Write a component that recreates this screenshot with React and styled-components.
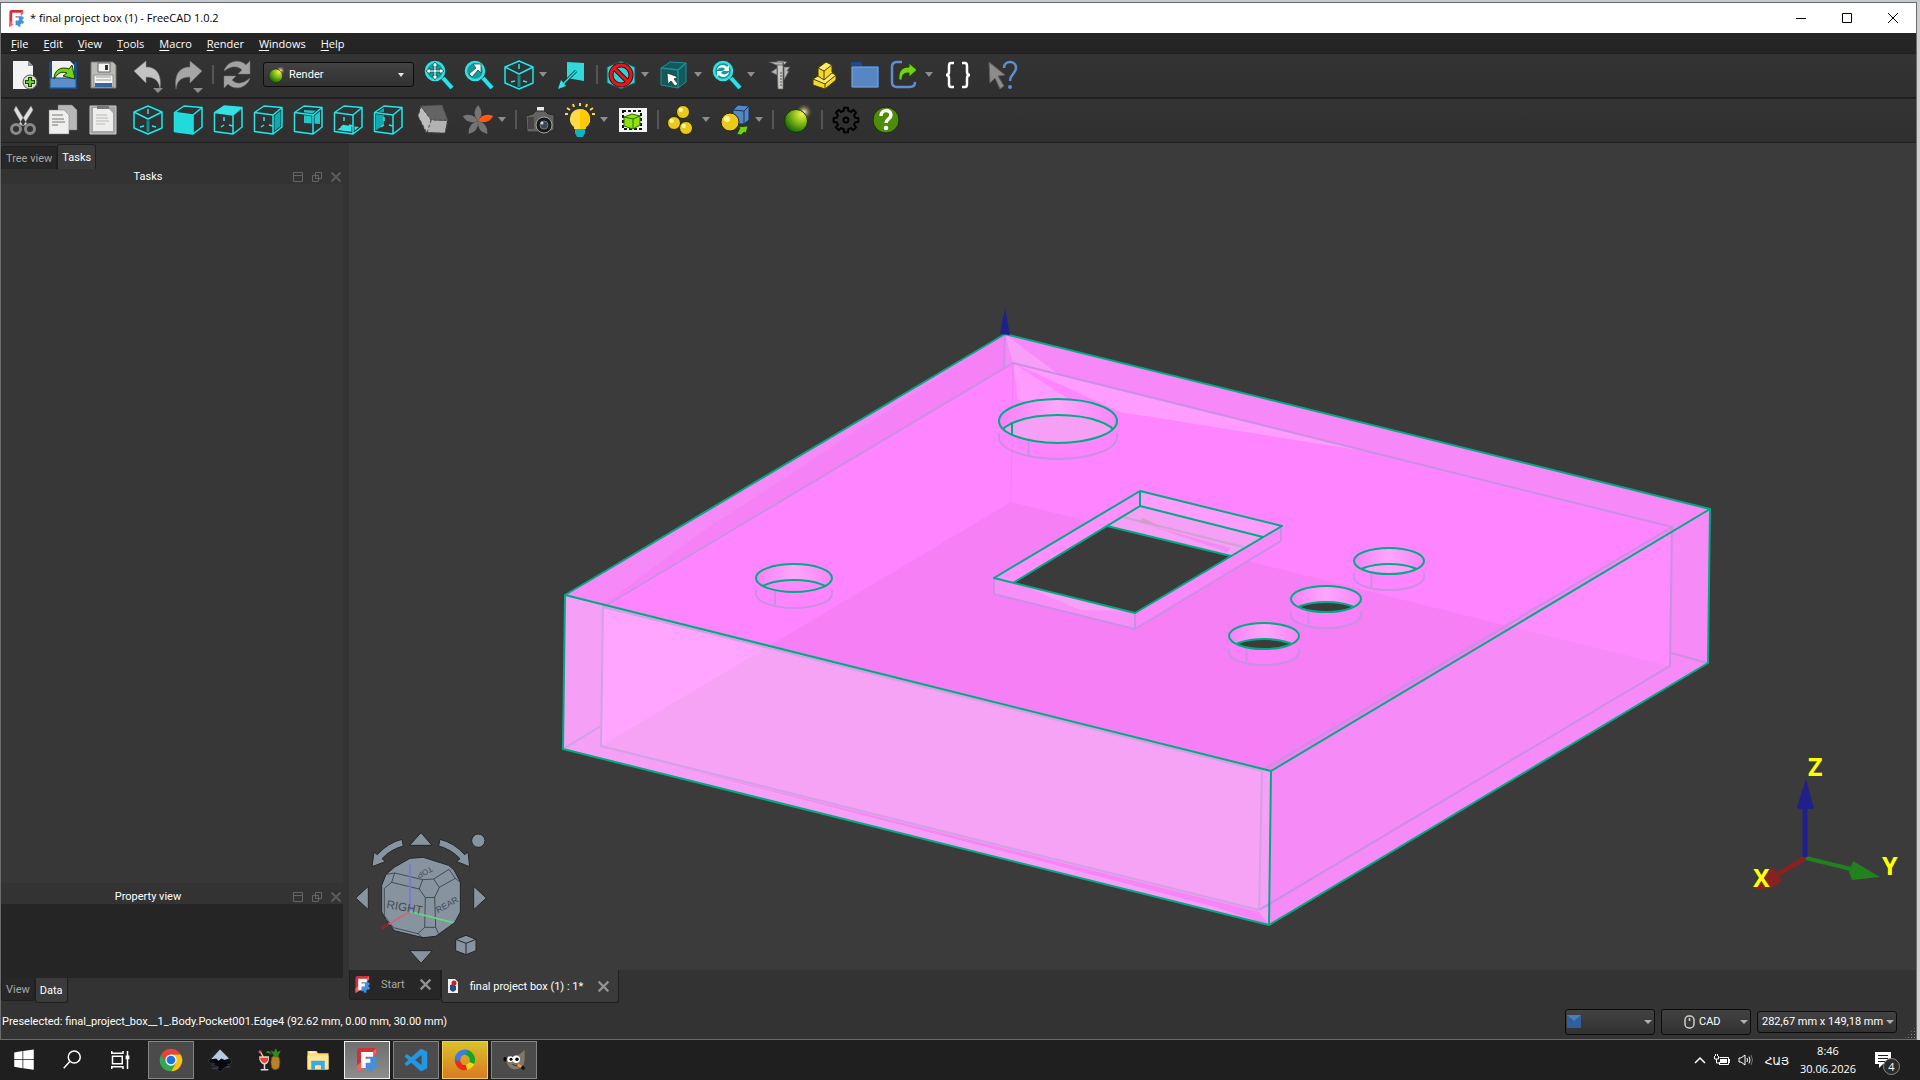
import React from "react";
import styled, { createGlobalStyle } from "styled-components";

const colors = {
  panel: "#333333",
  pane: "#373737",
  dark: "#252525",
  view: "#3b3b3b",
  line: "#1f1f1f",
  text: "#ffffff",
  muted: "#a9a9a9",
  cyan: "#34e0e2",
  edge: "#00ab84",
  hidden: "#c98fe3",
  steel: "#8794a0",
};

const GlobalStyle = createGlobalStyle`
  * {
    box-sizing: border-box;
  }

  body {
    margin: 0;
    background: #1f1f1f;
    font-family: "Open Sans", "Noto Sans", "DejaVu Sans", sans-serif;
    font-size: 11px;
    color: ${colors.text};
  }

  button,
  select {
    font: inherit;
    color: inherit;
    margin: 0;
    padding: 0;
    border: 0;
    background: none;
  }
`;

/* ---------- toolbar drawings, all on a 32 x 32 grid ---------- */

// a cyan wireframe with a dark halo, so that it reads on filled faces too
const Wire = ({ d }) => (
  <g fill="none" strokeLinejoin="round">
    <path d={d} stroke="#0c3f41" strokeWidth="3" />
    <path d={d} stroke={colors.cyan} strokeWidth="1.5" />
  </g>
);

const cubeFrame = "M2.5 8.5 21 11v19L2.5 27.5zM2.5 8.5 12 2l18 1.5L21 11M30 3.5V23l-9 7";

const CubeEdges = ({ ticks = true }) => (
  <>
    <Wire d={cubeFrame} />
    {ticks && <path d="M12 13v4M9 23l3-2M17 21l4 1" stroke={colors.cyan} strokeWidth="1.5" />}
  </>
);

const IsoCube = () => (
  <>
    <path d="M16 15v15" stroke="#138b8e" strokeWidth="3" />
    <Wire d="M16 2 30 8v16l-14 6L2 24V8zM2 8l14 7 14-7" />
    <path d="M16 5v5M8 23l4-1M20 22l4 1" stroke={colors.cyan} strokeWidth="1.5" />
  </>
);

const Lens = ({ children }) => (
  <>
    <path d="m20 19 9 10" stroke="#0b5556" strokeWidth="6" />
    <path d="m20 19 9 10" stroke={colors.cyan} strokeWidth="4" />
    <circle cx="12" cy="12" r="9" fill="#129a9d" stroke={colors.cyan} strokeWidth="2.5" />
    {children}
  </>
);

const Ball = ({ cx, cy, r = 6 }) => (
  <>
    <circle cx={cx} cy={cy} r={r} fill="#e8c91c" stroke="#2d2600" />
    <circle cx={cx - r / 3} cy={cy - r / 3} r={r / 3} fill="#fff59a" />
  </>
);

// outline of a cog wheel around 16,16
const cogPath = (teeth, outer, inner) => {
  const points = [];
  const step = (Math.PI * 2) / teeth;
  for (let i = 0; i < teeth; i++) {
    [
      [-0.3, inner],
      [-0.2, outer],
      [0.2, outer],
      [0.3, inner],
    ].forEach(([turn, r]) => {
      const a = (i + turn) * step;
      points.push(`${(16 + r * Math.sin(a)).toFixed(2)} ${(16 - r * Math.cos(a)).toFixed(2)}`);
    });
  }
  return `M${points.join("L")}Z`;
};

const petal = "M16 17Q9 9 16 1q7 8 0 16z";

const icons = {
  newDoc: (
    <>
      <path d="M6 2h15l5 5v23H6z" fill="#f3f3f3" />
      <path d="M21 2v5h5z" fill="#8a949c" />
      <circle cx="23" cy="23" r="7" fill="#d9dbd8" stroke="#55604e" />
      <path d="M23 18v10M18 23h10" stroke="#1e4b05" strokeWidth="4" />
      <path d="M23 19v8M19 23h8" stroke="#6ccb2a" strokeWidth="2" />
    </>
  ),
  open: (
    <>
      <path d="M2 3h3v12h22V3h3v27H2z" fill="#204a87" />
      <path d="M5 2h18l4 4v14H5z" fill="#f1f1f1" />
      <path d="M3 19h26v10H3z" fill="#5b8fcb" stroke="#204a87" />
      <path
        d="M7 20c0-9 7-13 15-10l3-4 3 14-12-3 4-3c-6-2-9 0-13 6z"
        fill="#73d216"
        stroke="#173d02"
      />
    </>
  ),
  save: (
    <>
      <path d="M4 3h22l3 3v23H4z" fill="#b9bab6" stroke="#767874" />
      <path d="M11 4h12v9H11z" fill="#f3f3f3" stroke="#666" />
      <path d="M18 6h3v5h-3z" fill="#333" />
      <path d="M7 16h19v12H7z" fill="#f8f8f8" stroke="#888" />
      <path d="M9 18h15M9 21h15" stroke="#999" />
      <path d="M8 24h17v4H8z" fill="#3465a4" />
    </>
  ),
  undo: (
    <path d="M2 12 14 2v6c11 0 16 8 14 22-1-8-5-12-14-12v6z" fill="#c3c3c3" stroke="#888" strokeWidth=".5" />
  ),
  redo: (
    <path d="M30 12 18 2v6C7 8 2 16 4 30c1-8 5-12 14-12v6z" fill="#a5a5a5" stroke="#777" strokeWidth=".5" />
  ),
  refresh: (
    <g fill="#a3a3a3" stroke="#777" strokeWidth=".5">
      <path d="M3 12C6 2 18-1 25 6l4-4v13H17l4-4c-5-5-11-4-18 1z" />
      <path d="M29 19c-3 10-15 13-22 6l-4 4V17h12l-4 4c5 5 11 4 18-2z" />
    </g>
  ),
  fit: (
    <Lens>
      <path
        d="m12 3 3 4h-2v4h4V9l4 3-4 3v-2h-4v4h2l-3 4-3-4h2v-4H7v2l-4-3 4-3v2h4V7H9z"
        fill="#fff"
        stroke="#0b5556"
        strokeWidth=".8"
      />
    </Lens>
  ),
  fitSelection: (
    <Lens>
      <path d="M18 5v9l-3-3-6 7-3-3 7-6-3-4z" fill="#fff" stroke="#0b5556" strokeWidth=".8" />
    </Lens>
  ),
  iso: <IsoCube />,
  align: (
    <>
      <path d="M11 3 28 4v18l-17-3z" fill="#2fd9dc" />
      <path d="m20 12-5 5" stroke="#063d3e" strokeWidth="3" />
      <path d="m16 16-9 9" stroke="#063d3e" strokeWidth="3" />
      <path d="m20 12-13 13" stroke={colors.cyan} strokeWidth="1.5" />
      <path d="m2 30 3-9 5 6z" fill={colors.cyan} />
    </>
  ),
  clip: (
    <>
      <path d="M16 2 30 8v16l-14 6L2 24V8z" fill="#2ad4d8" stroke="#0b5556" />
      <circle cx="16" cy="16" r="10" fill="none" stroke="#5c0000" strokeWidth="5" />
      <path d="m9 9 14 14" stroke="#5c0000" strokeWidth="5" />
      <circle cx="16" cy="16" r="10" fill="none" stroke="#dc1a1f" strokeWidth="3" />
      <path d="m9 9 14 14" stroke="#dc1a1f" strokeWidth="3" />
    </>
  ),
  pick: (
    <>
      <path d="M3 9 12 3l16 1v19l-8 6-17-3z" fill="#14595b" stroke="#1b9395" />
      <path d="m3 9 17 2 8-7M20 11v18" fill="none" stroke="#1b9395" strokeWidth="1.5" />
      <path d="m9 14 11 4-4 2 4 5-3 2-4-5-3 3z" fill="#fff" stroke="#222" strokeWidth=".7" />
    </>
  ),
  sync: (
    <Lens>
      <path
        d="M6 11c1-6 8-6 10-3l2-2v6h-6l2-2c-2-2-5-2-8 1zM18 13c-1 6-8 6-10 3l-2 2v-6h6l-2 2c2 2 5 2 8-1z"
        fill="#fff"
      />
    </Lens>
  ),
  caliper: (
    <>
      <path d="M13 2h6v28h-5z" fill="#c9cac4" stroke="#666" strokeWidth=".7" />
      <path
        d="M5 3h14v3H12zM10 11l3-2v7l-6-3zM19 2l4 1-3 3M19 8h7l-3 4h2l-5 9V9z"
        fill="#b7b8b2"
        stroke="#555"
        strokeWidth=".7"
      />
      <path d="M16 14h2m-2 3h2m-2 3h2m-2 3h2m-2 3h2" stroke="#555" />
    </>
  ),
  parts: (
    <g stroke="#4a3b00" strokeLinejoin="round">
      <path d="M4 20 9 17V9l8-6 6 3v7l4 3v5L16 30 4 26z" fill="#f4d92c" />
      <path d="m9 9 6 3 8-6-6-3zM15 21l8-7 4 2-11 9-12-5 5-3z" fill="#fbe96c" />
      <path d="M15 12v9M16 25v5" fill="none" />
    </g>
  ),
  folder: (
    <>
      <path d="M2 3h10l2 4h16v22H2z" fill="#204a87" />
      <path d="M3 8h26v20H3z" fill="#5686c4" stroke="#7ba5da" />
    </>
  ),
  link: (
    <>
      <path d="M13 3H8Q3 3 3 8v15q0 5 5 5h13q5 0 5-5" fill="none" stroke="#5d8fce" strokeWidth="2.5" />
      <path d="M10 21C9 12 13 8 20 8V4l8 7-8 7v-4c-5 0-7 1-7 7z" fill="#73d216" stroke="#1c4703" />
    </>
  ),
  braces: (
    <g fill="none" stroke="#fff" strokeWidth="2.5">
      <path d="M12 4H9Q7 4 7 7v6q0 3-3 3 3 0 3 3v6q0 3 2 3h3" />
      <path d="M20 4h3q2 0 2 3v6q0 3 3 3-3 0-3 3v6q0 3-2 3h-3" />
    </g>
  ),
  whatsThis: (
    <>
      <path d="m2 3 16 13-7 1 6 10-4 3-5-11-5 5z" fill="#8c8c88" stroke="#5f5f5c" />
      <path d="M17 9c0-8 12-8 12 0 0 6-6 6-6 13" fill="none" stroke="#5d8fce" strokeWidth="2.5" />
      <circle cx="23" cy="28" r="2" fill="#5d8fce" />
    </>
  ),
  cut: (
    <>
      <path d="m9 2 11 18-4 2L7 6zM24 2 12 20l4 2L26 6z" fill="#dedede" stroke="#888" strokeWidth=".5" />
      <circle cx="9" cy="25" r="4.5" fill="none" stroke="#888" strokeWidth="3" />
      <circle cx="23" cy="25" r="4.5" fill="none" stroke="#888" strokeWidth="3" />
    </>
  ),
  copy: (
    <>
      <path d="M11 1h14l5 5v20H11z" fill="#b8b8b8" stroke="#777" strokeWidth=".5" />
      <path d="M2 6h15l5 5v19H2z" fill="#eeeeec" stroke="#777" strokeWidth=".5" />
      <path d="M5 11h11M5 15h12M5 18h13M5 21h6" stroke="#777" />
    </>
  ),
  paste: (
    <>
      <path d="M3 2h26v28H3z" fill="#a5a5a5" stroke="#ccc" />
      <path d="M6 4h15l5 5v18H6z" fill="#eeeeec" />
      <path d="M10 2h12v3H10z" fill="#777" />
      <path d="M9 11h11M9 14h12M9 17h13M9 20h9" stroke="#bbb" />
    </>
  ),
  front: (
    <>
      <CubeEdges ticks={false} />
      <path d="M2.500 8.500 21 11v19L2.500 27.500z" fill="#22dadc" />
    </>
  ),
  top: (
    <>
      <CubeEdges />
      <path d="M2.500 8.500 12 2l18 1.500L21 11z" fill={colors.cyan} />
    </>
  ),
  right: (
    <>
      <path d="m21 11 9-7.500V23l-9 7z" fill="#12a9ac" />
      <CubeEdges />
    </>
  ),
  rear: (
    <>
      <path d="m12 6 16 1v13l-16-1z" fill="#22c6c9" />
      <CubeEdges ticks={false} />
    </>
  ),
  bottom: (
    <>
      <path d="m5 26 7-5 15 2-6 5z" fill={colors.cyan} />
      <CubeEdges />
    </>
  ),
  left: (
    <>
      <path d="m3 9 9-6v18l-9 6z" fill="#12a9ac" />
      <CubeEdges />
    </>
  ),
  ghost: (
    <>
      <path d="m4 3-3 9 8 16h2l4-12z" fill="#bdbdbd" />
      <path d="m15 16 15 1-2 12-18-1z" fill="#b2b2b2" />
      <path d="m4 2 21-1 6 16-17-1z" fill="#646464" />
      <path d="m4 2 21-1 6 16-3 12H10L1 12zM4 2l10 14h17M14 16l-4 13" fill="none" stroke="#4c4c4c" strokeDasharray="3 2" />
    </>
  ),
  star: (
    <>
      {[0, 144, 216, 288].map((angle) => (
        <path key={angle} d={petal} fill="#747474" transform={`rotate(${angle} 16 17)`} />
      ))}
      <path d={petal} fill="#ff5a14" transform="rotate(72 16 17)" />
    </>
  ),
  camera: (
    <>
      <path d="M13 3h7v4h-7z" fill="#e8e8e8" />
      <path d="M2 12 9 10l3-3h9l3 3 6 1v15l-6 2H3z" fill="#63645f" stroke="#2a2a2a" />
      <path d="M4 13h6v12H4z" fill="#444" />
      <circle cx="20" cy="21" r="8" fill="#1b1b1b" stroke="#a0a0a0" />
      <circle cx="20" cy="21" r="4" fill="#3a4658" stroke="#777" />
      <circle cx="18" cy="19" r="1.500" fill="#cfd8e8" />
    </>
  ),
  bulb: (
    <>
      <path d="M16 5a10 10 0 0 1 6 18v2H10v-2a10 10 0 0 1 6-18z" fill="#ffd943" />
      <path d="M16 5a10 10 0 0 1 6 18v2h-6z" fill="#ffcb00" />
      <path d="M11 25h10v4l-2 4h-6l-2-4z" fill="#12b3bf" />
      <path d="M16-1v3M9 0l1 3M23 0l-1 3M3 4l3 2M29 4l-3 2M1 10h3M31 10h-3" stroke="#ffd943" strokeWidth="2" />
    </>
  ),
  region: (
    <>
      <path d="M2 4h28v24H2z" fill="#f4f4f4" />
      <path d="M6 7h18v18H6z" fill="none" stroke="#111" strokeWidth="2" strokeDasharray="3 2" />
      <path d="m7 13 8-3 8 2v9l-7 4-9-3z" fill="#8be20f" stroke="#356b00" />
      <path d="m7 13 9 2 7-3M16 15v10" fill="none" stroke="#356b00" />
    </>
  ),
  balls: (
    <>
      <Ball cx={17} cy={8} r={6.5} />
      <Ball cx={8} cy={19} r={6.5} />
      <Ball cx={20} cy={24} r={6.5} />
    </>
  ),
  shapes: (
    <>
      <path d="m14 6 5-5 11 1v14l-5 4H14z" fill="#5686c4" stroke="#16345f" />
      <path d="m14 6 11 1 5-5M25 7v13" fill="none" stroke="#16345f" />
      <Ball cx={11} cy={18} r={9} />
      <path d="m18 30 3-6-2-1 10-1-2 7-2-1-3 3z" fill="#73d216" stroke="#1c4703" strokeWidth=".8" />
    </>
  ),
  render: (
    <>
      <circle cx="23" cy="8" r="8" fill="url(#sunGlow)" />
      <circle cx="15" cy="17" r="11.5" fill="url(#greenBall)" stroke="#0c3802" />
    </>
  ),
  gear: (
    <g fill="none" stroke="#000" strokeWidth="2" strokeLinejoin="round">
      <path d={cogPath(8, 12.5, 9.5)} />
      <circle cx="16" cy="16" r="2.5" />
    </g>
  ),
  help: (
    <>
      <circle cx="16" cy="16" r="13" fill="#4e8d0c" stroke="#16300a" />
      <path d="M11 12c0-7 10-7 10-1 0 4-5 4-5 8" fill="none" stroke="#fff" strokeWidth="3.5" />
      <circle cx="16" cy="24" r="2.3" fill="#fff" />
    </>
  ),
};

const SharedGradients = () => (
  <HiddenDefs aria-hidden="true">
    <defs>
      <radialGradient id="greenBall" cx=".75" cy=".2" r=".9">
        <stop offset="0" stopColor="#f3ef52" />
        <stop offset=".4" stopColor="#8fc31a" />
        <stop offset="1" stopColor="#0e5e08" />
      </radialGradient>
      <radialGradient id="sunGlow">
        <stop offset="0" stopColor="#fffbd0" />
        <stop offset="1" stopColor="#8a6a30" stopOpacity="0" />
      </radialGradient>
    </defs>
  </HiddenDefs>
);

const FreeCadLogo = ({ size }) => (
  <Glyph $w={size} $h={size} viewBox="-4 0 72 72" aria-hidden="true">
    <path d="M10 0h50v14L34 40 2 72V8q0-8 8-8z" fill="#cb333b" />
    <path d="m60 0-32 34L2 52v20l30-18 28-40z" fill="#ff585d" />
    <path d="m42 22 8 0 2 6 8-1 3 8-6 5 1 6 6 4-4 8-8-1-4 5 1 8-9 1-4-7-8 2V36z" fill="#418fde" />
    <path d="M14 12h36v14H28v6h14v12H28v16H14z" fill="#fff" />
  </Glyph>
);

const FloatIcon = () => (
  <Glyph $w={12} $h={12} viewBox="0 0 12 12" fill="none" stroke="#656565">
    <path d="M1.5 1.5h9v9h-9zM1.5 4.5h9" />
  </Glyph>
);

const RestoreIcon = () => (
  <Glyph $w={12} $h={12} viewBox="0 0 12 12" fill="none" stroke="#656565">
    <path d="M4.5 1.5h6v6h-6zM1.5 4.5h6v6h-6z" />
  </Glyph>
);

const CrossIcon = ({ size = 12, color = "#5c5c5c" }) => (
  <Glyph $w={size} $h={size} viewBox="0 0 12 12" fill="none" stroke={color} strokeWidth="2">
    <path d="m1.5 1.5 9 9m0-9-9 9" />
  </Glyph>
);

/* ---------- toolbars ---------- */

const fileBar = [
  [
    { icon: "newDoc", label: "New" },
    { icon: "open", label: "Open" },
    { icon: "save", label: "Save" },
  ],
  [
    { icon: "undo", label: "Undo", corner: true },
    { icon: "redo", label: "Redo", corner: true },
    "sep",
    { icon: "refresh", label: "Refresh" },
  ],
];

const viewBar = [
  [
    { icon: "fit", label: "Fit all" },
    { icon: "fitSelection", label: "Fit selection" },
    { icon: "iso", label: "Isometric", menu: true },
    { icon: "align", label: "Align to selection" },
    "sep",
    { icon: "clip", label: "Draw style", menu: true },
    { icon: "pick", label: "Selection filter", menu: true },
    { icon: "sync", label: "Sync view", menu: true },
    { icon: "caliper", label: "Measure" },
  ],
  [
    { icon: "parts", label: "Part" },
    { icon: "folder", label: "Group" },
    { icon: "link", label: "Make link", menu: true },
    { icon: "braces", label: "Expression" },
  ],
  [{ icon: "whatsThis", label: "What's this" }],
];

const renderBar = [
  [
    { icon: "cut", label: "Cut" },
    { icon: "copy", label: "Copy" },
    { icon: "paste", label: "Paste" },
  ],
  [
    { icon: "iso", label: "Isometric view" },
    { icon: "front", label: "Front view" },
    { icon: "top", label: "Top view" },
    { icon: "right", label: "Right view" },
    { icon: "rear", label: "Rear view" },
    { icon: "bottom", label: "Bottom view" },
    { icon: "left", label: "Left view" },
  ],
  [{ icon: "ghost", label: "Texture" }],
  [
    { icon: "star", label: "Project", menu: true },
    "sep",
    { icon: "camera", label: "Camera" },
    { icon: "bulb", label: "Light", menu: true },
    { icon: "region", label: "Rendering view" },
    "sep",
    { icon: "balls", label: "Material", menu: true },
    { icon: "shapes", label: "Apply material", menu: true },
    "sep",
    { icon: "render", label: "Render" },
    "sep",
    { icon: "gear", label: "Settings" },
    { icon: "help", label: "Help" },
  ],
];

const ToolGroups = ({ groups }) =>
  groups.map((group, g) => (
    <ToolGroup key={g}>
      {group.map((tool, i) =>
        tool === "sep" ? (
          <Separator key={i} />
        ) : (
          <ToolButton key={i} aria-label={tool.label} $menu={tool.menu}>
            <ToolIcon viewBox="0 0 32 32">
              {icons[tool.icon]}
              {tool.corner && <path d="M21 29h10l-5 5z" fill="#8d8d8d" />}
            </ToolIcon>
            {tool.menu && <Caret />}
          </ToolButton>
        )
      )}
    </ToolGroup>
  ));

/* ---------- 3D view ---------- */

const Bore = ({ id, cx, cy, rx, ry, through, inner = "#f5a0f5" }) => {
  const low = cy + 16;
  return (
    <g>
      <clipPath id={id}>
        <ellipse cx={cx} cy={cy} rx={rx} ry={ry} />
      </clipPath>
      <path
        d={`M${cx - rx} ${cy}V${low}A${rx} ${ry} 0 0 0 ${cx + rx} ${low}V${cy}`}
        fill="#ff84ff"
        fillOpacity=".5"
      />
      <path
        d={`M${cx - rx} ${low - 4}V${low}A${rx} ${ry} 0 0 0 ${cx + rx} ${low}V${low - 4}M${cx - rx / 2} ${cy + ry - 2}v15`}
        fill="none"
        stroke={colors.hidden}
        strokeWidth="2"
      />
      <ellipse cx={cx} cy={cy} rx={rx} ry={ry} fill="url(#boreWall)" />
      <g clipPath={`url(#${id})`}>
        <ellipse
          cx={cx}
          cy={low}
          rx={rx}
          ry={ry}
          fill={through ? colors.view : inner}
          stroke={colors.edge}
          strokeWidth="2"
        />
      </g>
      <ellipse cx={cx} cy={cy} rx={rx} ry={ry} fill="none" stroke={colors.edge} strokeWidth="2" />
    </g>
  );
};

const BoxModel = () => (
  <g strokeLinejoin="round">
    <polygon points="1005,334 1710,509 1708,663 1269,925 563,749 565,595" fill="#f688f7" />
    <polygon points="1005,334 700,533 603,605 1013,363 1004,369" fill="#f681f6" />
    <polygon points="1005,334 1058,374 1013,363" fill="#f89df8" />

    {/* top plate, seen against the inner walls and then the floor */}
    <polygon points="1013,363 1672,527 1271,771 603,605" fill="#ff84ff" />
    <polygon points="1013,363 1365,451 1120,412" fill="#ff9cff" />
    <polygon points="1013,363 1098,418 1018,400" fill="#ff9aff" />
    <polygon points="1011,502 1512,627 1271,771 769,646" fill="#f67ff6" />
    <path d="M1013 363 1011 502" stroke="#f180f3" />

    {/* front left side */}
    <polygon points="565,595 1271,771 1269,925 563,749" fill="#f69ff6" />
    <polygon points="603,607 1262,771 1259,910 601,746" fill="#ffa5ff" />
    <polygon points="601,746 769,646 1262,769 1259,910" fill="#f6a3f6" />
    <polygon points="670,765 1259,912 1269,925 1215,907 1040,861" fill="#f785f7" />

    {/* front right side */}
    <polygon points="1271,771 1710,509 1708,663 1269,925" fill="#f68af6" />
    <polygon points="1512,627 1672,531 1670,666" fill="#ff8cff" />

    <g fill="none" stroke={colors.hidden} strokeWidth="2">
      <path d="M1005 334 1004 369M603 607 1013 363 1672 527 1263 770" />
      <path d="M1672 527 1670 666 1259 910M1671 653l37 10" />
    </g>
    <g fill="none" stroke="#cfa2e4" strokeWidth="2">
      <path d="M603 607 1262 771 1259 910 601 746zM563 749l38-23" />
    </g>

    {/* display cut-out */}
    <path d="M994 578v16l141 35 146-88v-15l-146 87z" fill="#fb88fb" />
    <path d="M994 578v16l141 35v-16z" fill="#f88ff8" />
    <path d="M1020 584 1135 613 1133 611 1080 610z" fill="#f8a0f8" />
    <path
      d="M994 578v16l141 35 146-88v-15M1135 613v16"
      fill="none"
      stroke={colors.hidden}
      strokeWidth="2"
    />
    <polygon points="1140,491 1282,526 1135,613 994,578" fill="#ff9dff" />
    <polygon points="1140,491 1140,506 1013,583 994,578" fill="#ff8fff" />
    <polygon points="1140,506 1263,537 1231,556 1107,526" fill="#f5a0f5" />
    <path d="m1148 525 83 23-4 4z" fill="#f58af5" />
    <path d="M1123 517l120 30" stroke="#c9a4d4" strokeWidth="2" />
    <polygon points="1142,518 1162,527 1140,523" fill="#cf9fc9" />
    <polygon points="1107,526 1231,556 1135,613 1013,583" fill={colors.view} />
    <g fill="none" stroke={colors.edge} strokeWidth="2">
      <path d="M1140 491 1282 526 1135 613 994 578zM1140 491v15l123 31M1140 506 1013 583M1107 526l124 30" />
    </g>

    <Bore id="boreLarge" cx={1058} cy={421} rx={59} ry={22} />
    <path d="M1012 422v13" stroke={colors.edge} strokeWidth="2" />
    <Bore id="boreLeft" cx={794} cy={578} rx={38} ry={14} inner="#ff88ff" />
    <Bore id="boreA" cx={1389} cy={561} rx={35} ry={13} inner="#ffa0ff" />
    <Bore id="boreB" cx={1326} cy={599} rx={35} ry={13} through />
    <Bore id="boreC" cx={1264} cy={636} rx={35} ry={13} through />

    <g fill="none" stroke={colors.edge} strokeWidth="2">
      <path d="M1005 334 1710 509 1708 663 1269 925 563 749 565 595z" />
      <path d="M565 595 1271 771 1710 509M1271 771 1269 925" />
    </g>
    <path d="m1005 308 5 27-10-1z" fill="#20208a" />
  </g>
);

const AxisCross = () => (
  <g>
    <path d="m1805 858-28 17" stroke="#852222" strokeWidth="5" />
    <path d="m1753 890 20-23 9 14-10 7z" fill="#852222" />
    <path d="m1806 858 45 11" stroke="#22801f" strokeWidth="4" />
    <path d="m1880 877-27-16-4 11 3 8z" fill="#22801f" />
    <path d="M1805 857v-50" stroke="#20208a" strokeWidth="5" />
    <path d="m1806 779-9 28 2 2h15z" fill="#20208a" />
    <AxisLabel x="1753" y="887">X</AxisLabel>
    <AxisLabel x="1882" y="875">Y</AxisLabel>
    <AxisLabel x="1808" y="776">Z</AxisLabel>
  </g>
);

const NavigationCube = () => (
  <svg x="340" y="820" width="300" height="200" viewBox="0 0 900 600">
    <g fill={colors.steel} stroke="#22262a" strokeWidth="3" strokeLinejoin="round">
      <path d="m243 38 33 38h-67zM243 430l-34-38h68zM47 234l38-35v70zM439 234l-38-35v70z" />
      <path d="M186 58q-42 10-74 46l-10-8-6 44 40-15-10-9q26-28 64-38z" />
      <path d="M300 58q42 10 74 46l10-8 5 44-39-15 10-9q-26-28-64-38z" />
      <circle cx="415" cy="62" r="20" />
      <path d="m347 358 31-12 30 12v34l-30 12-31-12z" />
      <path d="m347 358 31 12 30-12M378 370v34" fill="none" />
      <path d="m210 115 40-3 76 24 16 14 19 36v90l-17 32-57 41-38 4-86-21-26-34-12-22v-80l13-33 26-22z" />
      <path
        fill="none"
        strokeWidth="2"
        d="m164 159 84 20 33-2 46-29M155 187l83 20 18 26 28-1 14-30 48-27M248 179l-10 28M281 177l17 25M164 159l-9 28-22 18v82M138 163l26-4M256 233l-2 89-20 19M284 232l3 90-33 0M287 322l8 18M160 323l74 18 14 12M327 148l19 27 14 11M133 287l27 36"
      />
    </g>
    <path d="M210 133v142" stroke="#7678dc" strokeWidth="5" />
    <path d="m126 324 84-49" stroke="#d0676f" strokeWidth="5" />
    <path d="m126 324 20-12" stroke="#a3151a" strokeWidth="6" />
    <path d="m210 275 130 33" stroke="#66d586" strokeWidth="5" />
    <CubeLabel transform="translate(138 264) rotate(10)" $size={35}>RIGHT</CubeLabel>
    <CubeLabel transform="translate(294 280) rotate(-30)" $size={26}>REAR</CubeLabel>
    <CubeLabel transform="translate(272 138) rotate(152)" $size={24}>TOP</CubeLabel>
  </svg>
);

const Scene = () => (
  <SceneSvg viewBox="349 143 1567 827" role="img" aria-label="3D view of the project box">
    <defs>
      <linearGradient id="boreWall">
        <stop offset="0" stopColor="#f780f7" />
        <stop offset=".5" stopColor="#fda6fd" />
        <stop offset="1" stopColor="#f985f9" />
      </linearGradient>
    </defs>
    <BoxModel />
    <AxisCross />
    <NavigationCube />
  </SceneSvg>
);

/* ---------- task bar drawings ---------- */

const taskIcons = {
  start: <path d="M3 6l11-2v11H3zM15 4l14-2v13H15zM3 16h11v11L3 25zM15 16h14v13l-14-2z" fill="#fff" />,
  search: (
    <g fill="none" stroke="#fff" strokeWidth="2">
      <circle cx="19" cy="12" r="8" />
      <path d="M13 18 5 27" />
    </g>
  ),
  taskView: (
    <g fill="none" stroke="#fff" strokeWidth="2">
      <path d="M6 11h13v10H6zM5 4v3h15V4M5 28v-3h15v3M26 4v24" />
      <path d="M26 10v5" strokeWidth="5" />
    </g>
  ),
  chrome: (
    <>
      <path d="M16 1a15 15 0 0 1 13 7.500H16L9.500 20 3 8.500A15 15 0 0 1 16 1z" fill="#ea4335" />
      <path d="M29 8.500A15 15 0 0 1 16 31l6.500-11.200L16 8.500z" fill="#fbc116" />
      <path d="M3 8.500 9.500 19.800h13L16 31A15 15 0 0 1 3 8.500z" fill="#34a853" />
      <circle cx="16" cy="16" r="7.500" fill="#fff" />
      <circle cx="16" cy="16" r="5.800" fill="#1a73e8" />
    </>
  ),
  inkscape: (
    <>
      <path d="M16 1 31 17q2 4-5 5l4 3-8 1-5 6-7-4 4-3-9-2 4-2q-10-1-8-5z" fill="#080a0e" stroke="#3a3f48" />
      <path d="m16 2 12 12-6 2-4-2-4 3-3-3-7 1z" fill="#b9c9e0" />
      <path d="M5 27h9M24 25h5" stroke="#3a3f48" strokeWidth="2" />
    </>
  ),
  drink: (
    <>
      <path d="M20 12q5-4 9 0 3 6 0 15-5 4-9 0-3-8 0-15z" fill="#b98224" stroke="#704b10" />
      <path d="m24 12-5-8 4 2 2-5 2 5 4-2-4 8zM12 6q4-4 7 2" fill="#2f8b22" stroke="#2f8b22" />
      <path d="M3 11h13q1 9-5 11v6h4v2H5v-2h4v-6q-7-3-6-11z" fill="#ddd7df" />
      <path d="M4 13h11q0 6-5 7-5-1-6-7z" fill="#e8452e" />
      <circle cx="4" cy="5" r="2" fill="#e43fb5" />
      <path d="m5 6 4 7" stroke="#fbd34a" strokeWidth="2" />
    </>
  ),
  explorer: (
    <>
      <path d="M2 4h12l2 3h14v22H2z" fill="#ffd868" />
      <path d="M2 10h28v18H2z" fill="#ffe795" />
      <path d="M5 5h7v2H5z" fill="#fff" />
      <path d="M7 29V17h18v12h-5v-6h-8v6z" fill="#38a9e6" />
    </>
  ),
  code: (
    <g transform="translate(1 1) scale(1.25)">
      <path
        fill="#2497e3"
        d="M23.15 2.587L18.21.21a1.494 1.494 0 0 0-1.705.29l-9.46 8.63-4.12-3.128a.999.999 0 0 0-1.276.057L.327 7.261A1 1 0 0 0 .326 8.74L3.899 12 .326 15.26a1 1 0 0 0 .001 1.479L1.65 17.94a.999.999 0 0 0 1.276.057l4.12-3.128 9.46 8.63a1.492 1.492 0 0 0 1.704.29l4.942-2.377A1.5 1.5 0 0 0 24 20.06V3.939a1.5 1.5 0 0 0-.85-1.352zm-5.146 14.861L10.826 12l7.178-5.448v10.896z"
      />
    </g>
  ),
  ring: (
    <g fill="none" strokeWidth="7">
      <path d="M26 16a10 10 0 0 1-16 8" stroke="#f7d713" />
      <path d="M18 26A10 10 0 0 1 7 12" stroke="#e82a20" />
      <path d="M6 17A10 10 0 0 1 21 7" stroke="#3b7de0" />
      <path d="M18 6a10 10 0 0 1 7 14" stroke="#12a52c" />
    </g>
  ),
  gimp: (
    <>
      <path d="M6 15q7 1 11-5 6 1 13-8 1 13-1 20-5 8-15 6-8-3-8-13z" fill="#81766a" />
      <circle cx="11" cy="15" r="4" fill="#fff" />
      <circle cx="19" cy="15" r="5" fill="#fff" />
      <circle cx="12" cy="15" r="2" />
      <circle cx="20" cy="15" r="2.3" />
      <ellipse cx="4" cy="15" rx="2" ry="3" />
      <path d="M14 22q5 3 9 0" stroke="#222" fill="none" />
      <path d="m21 22 6 4" stroke="#f39a2e" strokeWidth="3" />
      <path d="m26 25 4 3" stroke="#111" strokeWidth="4" />
    </>
  ),
};

const TaskIcon = ({ name }) => (
  <Glyph $w={24} $h={24} viewBox="0 0 32 32">
    {taskIcons[name]}
  </Glyph>
);

const menus = ["File", "Edit", "View", "Tools", "Macro", "Render", "Windows", "Help"];

const DockTitle = ({ children, tall }) => (
  <DockHeader $tall={tall}>
    <DockName>{children}</DockName>
    <DockButtons>
      <button aria-label={`Collapse ${children}`}>
        <FloatIcon />
      </button>
      <button aria-label={`Float ${children}`}>
        <RestoreIcon />
      </button>
      <button aria-label={`Close ${children}`}>
        <CrossIcon />
      </button>
    </DockButtons>
  </DockHeader>
);

const App = () => (
  <Desktop>
    <GlobalStyle />
    <SharedGradients />
    <Window>
      <TitleBar>
        <FreeCadLogo size={17} />
        <Title>* final project box (1) - FreeCAD 1.0.2</Title>
        <WindowButton aria-label="Minimize">
          <Glyph $w={10} $h={10} viewBox="0 0 10 10" stroke="#000">
            <path d="M0 5.5h10" />
          </Glyph>
        </WindowButton>
        <WindowButton aria-label="Maximize">
          <Glyph $w={10} $h={10} viewBox="0 0 10 10" fill="none" stroke="#000">
            <path d="M.5.5h9v9h-9z" />
          </Glyph>
        </WindowButton>
        <WindowButton aria-label="Close">
          <Glyph $w={10} $h={10} viewBox="0 0 10 10" stroke="#000">
            <path d="m0 0 10 10M10 0 0 10" />
          </Glyph>
        </WindowButton>
      </TitleBar>

      <MenuBar>
        {menus.map((name) => (
          <MenuItem key={name}>
            <u>{name[0]}</u>
            {name.slice(1)}
          </MenuItem>
        ))}
      </MenuBar>

      <Toolbar $line={2}>
        <ToolGroups groups={fileBar} />
        <WorkbenchBox>
          <WorkbenchSelect aria-label="Workbench">
            <option>Render</option>
          </WorkbenchSelect>
          <ComboIcon>
            <Glyph $w={16} $h={16} viewBox="2 2 27 27">
              {icons.render}
            </Glyph>
          </ComboIcon>
          <ComboCaret $light />
        </WorkbenchBox>
        <ToolGroups groups={viewBar} />
      </Toolbar>
      <Toolbar $line={1}>
        <ToolGroups groups={renderBar} />
      </Toolbar>

      <Workspace>
        <Dock>
          <DockTabs>
            <DockTab>Tree view</DockTab>
            <DockTab $active>Tasks</DockTab>
          </DockTabs>
          <DockTitle>Tasks</DockTitle>
          <TaskPane />
          <DockTitle tall>Property view</DockTitle>
          <PropertyPane />
          <DockTabs $bottom>
            <DockTab $bottom>View</DockTab>
            <DockTab $bottom $active>
              Data
            </DockTab>
          </DockTabs>
        </Dock>
        <Main>
          <Viewport>
            <Scene />
          </Viewport>
          <DocTabs>
            <DocTab>
              <FreeCadLogo size={17} />
              <DocName>Start</DocName>
              <button aria-label="Close Start">
                <CrossIcon size={13} color="#929292" />
              </button>
            </DocTab>
            <DocTab $active>
              <Glyph $w={14} $h={14} viewBox="-2 0 14 14">
                <path d="M0 0h7l3 3v11H0z" fill="#f2f2f2" />
                <path d="m2 6 3-1 3 2v4l-3 2-3-2z" fill="#274b86" />
                <circle cx="6" cy="4" r="2.5" fill="#c8202a" />
              </Glyph>
              <DocName>final project box (1) : 1*</DocName>
              <button aria-label="Close final project box">
                <CrossIcon size={13} color="#929292" />
              </button>
            </DocTab>
          </DocTabs>
        </Main>
      </Workspace>

      <StatusBar>
        <StatusText>
          Preselected: final_project_box__1_.Body.Pocket001.Edge4 (92.62 mm, 0.00 mm, 30.00 mm)
        </StatusText>
        <StatusCombo $w={90}>
          <StatusSelect aria-label="Notifications" $h={26}>
            <option aria-label="None"></option>
          </StatusSelect>
          <ComboIcon $flush>
            <Glyph $w={14} $h={13} viewBox="0 0 14 13">
              <path d="M0 0h14v13H0z" fill="#2f5f9f" />
              <path d="M0 0h14L7 6z" fill="#4c7dbb" />
            </Glyph>
          </ComboIcon>
          <ComboCaret />
        </StatusCombo>
        <StatusCombo $w={90}>
          <StatusSelect aria-label="Navigation style" $h={26} $indent={37}>
            <option>CAD</option>
          </StatusSelect>
          <MouseIcon>
            <Glyph $w={11} $h={14} viewBox="0 0 11 14" fill="none" stroke="#d0d0c8" strokeWidth="1.5">
              <rect x="1" y="1" width="9" height="12" rx="4" />
              <path d="M5.5 3v3" />
            </Glyph>
          </MouseIcon>
          <ComboCaret />
        </StatusCombo>
        <StatusCombo $w={140}>
          <StatusSelect aria-label="View size" $h={22} $indent={4}>
            <option>282,67 mm x 149,18 mm</option>
          </StatusSelect>
          <ComboCaret />
        </StatusCombo>
        <Grip aria-hidden="true" />
      </StatusBar>
    </Window>

    <TaskBar>
      {["start", "search", "taskView"].map((name) => (
        <ShellButton key={name} aria-label={name}>
          <TaskIcon name={name} />
        </ShellButton>
      ))}
      <TaskList>
        <TaskButton aria-label="Chrome" $state="open">
          <TaskIcon name="chrome" />
        </TaskButton>
        <TaskButton aria-label="Inkscape">
          <TaskIcon name="inkscape" />
        </TaskButton>
        <TaskButton aria-label="Cocktail">
          <TaskIcon name="drink" />
        </TaskButton>
        <TaskButton aria-label="Explorer">
          <TaskIcon name="explorer" />
        </TaskButton>
        <TaskButton aria-label="FreeCAD" $state="active">
          <FreeCadLogo size={24} />
        </TaskButton>
        <TaskButton aria-label="Code" $state="open">
          <TaskIcon name="code" />
        </TaskButton>
        <TaskButton aria-label="Browser" $state="alert">
          <TaskIcon name="ring" />
        </TaskButton>
        <TaskButton aria-label="GIMP" $state="open">
          <TaskIcon name="gimp" />
        </TaskButton>
      </TaskList>
      <Tray>
        <button aria-label="Hidden icons">
          <Glyph $w={12} $h={8} viewBox="0 0 12 8" fill="none" stroke="#fff" strokeWidth="1.5">
            <path d="m1 7 5-5 5 5" />
          </Glyph>
        </button>
        <Glyph $w={16} $h={12} viewBox="0 0 16 12" aria-hidden="true">
          <path d="M5.5 3.5h9v7H5M15.500 5v4M5.500 8v3" fill="none" stroke="#fff" />
          <path d="M6 5h7v4H6z" fill="#fff" />
          <path d="M.5 2v3h4V2M1.500 0v2m2-2v2M2.500 5v4h3" fill="none" stroke="#fff" />
        </Glyph>
        <Glyph $w={17} $h={12} viewBox="0 0 17 12" fill="none" stroke="#fff" aria-hidden="true">
          <path d="M1 4v4h2l4 3V1L3 4zM9 4q1 2 0 4M11 2.500q2 3.500 0 7" />
          <path d="M13 1q3 5 0 10" stroke="#777" />
        </Glyph>
        <Language>ՀԱՅ</Language>
        <Clock>
          <time>8:46</time>
          <time>30.06.2026</time>
        </Clock>
        <Notices aria-label="Notifications, 4 new">
          <Glyph $w={16} $h={16} viewBox="0 0 16 16">
            <path d="M0 0h16v12H8l-4 4v-4H0z" fill="#fff" />
            <path d="M3 3.500h10M3 6.500h10M3 9.500h7" stroke="#1f1f1f" />
          </Glyph>
          <Badge>4</Badge>
        </Notices>
      </Tray>
    </TaskBar>
  </Desktop>
);

/* ---------- styles ---------- */

const Glyph = styled.svg`
  display: block;
  flex: none;
  width: ${(props) => props.$w}px;
  height: ${(props) => props.$h}px;
`;

const HiddenDefs = styled.svg`
  position: absolute;
  width: 0;
  height: 0;
`;

const Desktop = styled.div`
  display: flex;
  flex-direction: column;
  height: 100vh;
`;

const Window = styled.div`
  flex: 1;
  min-height: 0;
  display: flex;
  flex-direction: column;
  background: ${colors.panel};
  border: 1px solid #6b6b6b;
  box-shadow: 3px 0 0 #cfcfcf, 0 -2px 0 #c3cad0, 3px -2px 0 #c3cad0;
  margin: 2px 3px 0 0;
`;

const TitleBar = styled.header`
  display: flex;
  align-items: center;
  height: 30px;
  padding-left: 7px;
  background: #fff;
  color: #000;
`;

const Title = styled.h1`
  flex: 1;
  margin: 0 0 0 5px;
  padding-bottom: 2px;
  font-size: 11px;
  font-weight: 400;
`;

const WindowButton = styled.button`
  display: grid;
  place-items: center;
  width: 46px;
  height: 30px;
`;

const MenuBar = styled.nav`
  display: flex;
  align-items: center;
  gap: 15px;
  height: 21px;
  padding: 2px 0 0 10px;
  background: ${colors.dark};
  border-bottom: 1px solid ${colors.line};
`;

const MenuItem = styled.button`
  line-height: 18px;

  u {
    text-underline-offset: 2px;
  }
`;

const Toolbar = styled.div`
  display: flex;
  align-items: center;
  gap: 5px;
  height: ${(props) => 43 + props.$line}px;
  padding: 0 0 2px 2px;
  background: linear-gradient(#343434, #2f2f2f);
  border-bottom: ${(props) => props.$line}px solid ${colors.line};
`;

const ToolGroup = styled.div`
  display: flex;
  align-items: center;
`;

const ToolButton = styled.button`
  display: flex;
  align-items: center;
  width: ${(props) => (props.$menu ? 53 : 40)}px;
  padding-left: 4px;
`;

const ToolIcon = styled.svg`
  flex: none;
  width: 32px;
  height: 32px;
  overflow: visible;
`;

const Caret = styled.span`
  margin-left: 4px;
  border: 4px solid transparent;
  border-top: 5px solid #8d8d8d;
  border-bottom: 0;
`;

const Separator = styled.span`
  width: 2px;
  height: 19px;
  margin: 0 3px 0 4px;
  background: #555;
`;

const Combo = styled.div`
  display: grid;
  align-items: center;

  > * {
    grid-area: 1 / 1;
  }
`;

const WorkbenchBox = styled(Combo)`
  width: 151px;
  margin-left: 1px;
`;

const ComboSelect = styled.select`
  appearance: none;
  width: 100%;
  border: 1px solid #0c0c0c;
  border-radius: 3px;
  background: linear-gradient(#424242, #313131);
  font-family: Roboto, "Open Sans", sans-serif;
`;

const WorkbenchSelect = styled(ComboSelect)`
  height: 25px;
  padding-left: 25px;
`;

const ComboIcon = styled.span`
  pointer-events: none;
  margin-left: ${(props) => (props.$flush ? 2 : 5)}px;
`;

const MouseIcon = styled(ComboIcon)`
  margin-left: 23px;
`;

const ComboCaret = styled.span`
  justify-self: end;
  pointer-events: none;
  margin-right: ${(props) => (props.$light ? 10 : 3)}px;
  border: ${(props) => (props.$light ? 3 : 4)}px solid transparent;
  border-top: 4px solid ${(props) => (props.$light ? "#e4e4e4" : "#b0b0b0")};
  border-bottom: 0;
`;

const Workspace = styled.div`
  flex: 1;
  min-height: 0;
  display: flex;
  font-family: Roboto, "Open Sans", sans-serif;
`;

const Dock = styled.aside`
  display: flex;
  flex-direction: column;
  flex: none;
  width: 348px;
  padding-right: 6px;
`;

const DockTabs = styled.div`
  display: flex;
  align-items: ${(props) => (props.$bottom ? "flex-start" : "flex-end")};
  height: 26px;
`;

const DockTab = styled.button`
  height: ${(props) => (props.$active ? 25 : 23)}px;
  padding: 0 4px;
  color: ${(props) => (props.$active ? colors.text : colors.muted)};
  background: ${(props) => (props.$active ? colors.view : "#272727")};
  border: 1px solid ${colors.line};
  border-${(props) => (props.$bottom ? "top" : "bottom")}: 0;
  border-radius: ${(props) => (props.$bottom ? "0 0 3px 3px" : "3px 3px 0 0")};
`;

const DockHeader = styled.div`
  display: flex;
  align-items: center;
  height: ${(props) => (props.$tall ? 21 : 15)}px;
  padding-top: ${(props) => (props.$tall ? 6 : 0)}px;
`;

const DockName = styled.h2`
  flex: 1;
  margin: 0;
  padding-left: 3px;
  text-align: center;
  font-size: 11px;
  font-weight: 400;
  line-height: 15px;
`;

const DockButtons = styled.div`
  display: flex;
  gap: 7px;
  margin-right: 1px;
`;

const TaskPane = styled.div`
  flex: 1;
  background: ${colors.pane};
`;

const PropertyPane = styled.div`
  height: 74px;
  background: ${colors.dark};
`;

const Main = styled.main`
  flex: 1;
  min-width: 0;
  display: flex;
  flex-direction: column;
`;

const Viewport = styled.div`
  flex: 1;
  min-height: 0;
  background: ${colors.view};
`;

const SceneSvg = styled.svg`
  display: block;
  width: 100%;
  height: 100%;
`;

const AxisLabel = styled.text`
  fill: #ffff00;
  font-family: "Noto Sans", sans-serif;
  font-size: 25px;
  font-weight: 700;
`;

const CubeLabel = styled.text`
  fill: #454b51;
  font-family: "Liberation Sans", sans-serif;
  font-size: ${(props) => props.$size}px;
`;

const DocTabs = styled.div`
  display: flex;
  align-items: flex-start;
  height: 34px;
`;

const DocTab = styled.div`
  display: flex;
  align-items: center;
  height: ${(props) => (props.$active ? 33 : 30)}px;
  padding: 0 8px 0 4px;
  color: ${(props) => (props.$active ? colors.text : colors.muted)};
  background: ${(props) => (props.$active ? colors.view : "#272727")};
  border: 1px solid ${colors.line};
  border-top: 0;
  border-radius: 0 0 3px 3px;
`;

const DocName = styled.button`
  margin: 0 14px 0 10px;
`;

const StatusBar = styled.footer`
  display: flex;
  align-items: center;
  gap: 6px;
  height: 35px;
  padding-left: 1px;
  font-family: Roboto, "Open Sans", sans-serif;
`;

const StatusText = styled.span`
  flex: 1;
`;

const StatusCombo = styled(Combo)`
  width: ${(props) => props.$w}px;
`;

const StatusSelect = styled(ComboSelect)`
  height: ${(props) => props.$h}px;
  padding-left: ${(props) => props.$indent || 0}px;
`;

const Grip = styled.span`
  align-self: flex-end;
  width: 12px;
  height: 12px;
  margin-left: 1px;
  background: radial-gradient(#888 1px, transparent 1px) 0 0 / 3px 3px;
  clip-path: polygon(100% 0, 100% 100%, 0 100%);
`;

const TaskBar = styled.footer`
  display: flex;
  align-items: center;
  height: 40px;
  background: #1f1f1f;
`;

const ShellButton = styled.button`
  display: grid;
  place-items: center;
  width: 48px;
  height: 40px;
`;

const TaskList = styled.div`
  display: flex;
  gap: 3px;
  flex: 1;
  margin-left: 4px;
`;

const taskFill = {
  open: "#4b4b4b",
  active: "linear-gradient(#6f6f6f, #8d8d8d)",
  alert: "linear-gradient(#d9c22a, #d97a22)",
};

const taskBorder = {
  open: "#858585",
  active: "#f0f0f0",
  alert: "#f2cf52",
};

const TaskButton = styled.button`
  display: grid;
  place-items: center;
  width: 46px;
  height: 38px;
  background: ${(props) => taskFill[props.$state] || "none"};
  border: 1px solid ${(props) => taskBorder[props.$state] || "transparent"};
`;

const Tray = styled.div`
  display: flex;
  align-items: center;
  padding-right: 21px;
  gap: 8px;
`;

const Language = styled.span`
  margin-left: 2px;
`;

const Clock = styled.div`
  display: flex;
  flex-direction: column;
  align-items: center;
  width: 62px;
  line-height: 18px;
`;

const Notices = styled.button`
  position: relative;
  width: 28px;
  height: 24px;
  margin-left: 4px;
  padding-left: 4px;
`;

const Badge = styled.span`
  position: absolute;
  right: -1px;
  bottom: -3px;
  width: 17px;
  height: 17px;
  border: 1px solid #8a8a8a;
  border-radius: 50%;
  background: #2b2b2b;
  line-height: 15px;
  text-align: center;
`;

export default App;
